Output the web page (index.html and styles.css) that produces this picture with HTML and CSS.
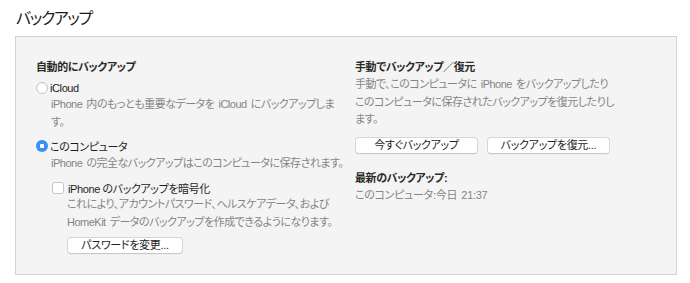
FILE: index.html
```html
<!DOCTYPE html>
<html lang="ja">
<head>
<meta charset="utf-8">
<title>バックアップ</title>
<link rel="stylesheet" href="styles.css">
</head>
<body>
<div class="page">
  <h1 class="title">バックアップ</h1>
  <section class="panel">
    <div class="col col-left">
      <h2 class="heading">自動的にバックアップ</h2>
      <div class="option">
        <span class="radio"></span>
        <span class="label">iCloud</span>
      </div>
      <p class="desc indent">iPhone 内のもっとも重要なデータを iCloud にバックアップしま<br>す。</p>
      <div class="option option-gap">
        <span class="radio radio-on"></span>
        <span class="label">このコンピュータ</span>
      </div>
      <p class="desc indent">iPhone の完全なバックアップはこのコンピュータに保存されます。</p>
      <div class="option check-row">
        <span class="checkbox"></span>
        <span class="label">iPhone のバックアップを暗号化</span>
      </div>
      <p class="desc indent2">これにより、アカウントパスワード、ヘルスケアデータ、および<br>HomeKit データのバックアップを作成できるようになります。</p>
      <div class="indent2 btn-row-left">
        <button class="btn btn-pass">パスワードを変更...</button>
      </div>
    </div>
    <div class="col col-right">
      <h2 class="heading">手動でバックアップ／復元</h2>
      <p class="desc">手動で、このコンピュータに iPhone をバックアップしたり<br>このコンピュータに保存されたバックアップを復元したりし<br>ます。</p>
      <div class="btn-row">
        <button class="btn btn-wide">今すぐバックアップ</button>
        <button class="btn btn-wide">バックアップを復元...</button>
      </div>
      <h2 class="heading latest">最新のバックアップ:</h2>
      <p class="status">このコンピュータ:今日 21:37</p>
    </div>
  </section>
</div>
</body>
</html>
```
FILE: styles.css
```css
* { box-sizing: border-box; }
html, body { margin: 0; padding: 0; background: #ffffff; }
body {
  font-family: "Liberation Sans", "Noto Sans CJK JP", sans-serif;
  font-feature-settings: "palt";
  color: #222;
  width: 690px;
  height: 283px;
  overflow: hidden;
}
.page { padding: 8px 0 0 15px; }
.title {
  margin: 0 0 6px 1px;
  font-size: 16px;
  line-height: 22px;
  font-weight: normal;
  letter-spacing: -1.4px;
  color: #1c1c1c;
}
.panel {
  width: 662px;
  border: 1px solid #d3d3d3;
  background: #f4f4f4;
  padding: 22px 20px 20px 20px;
  display: grid;
  grid-template-columns: 319px 1fr;
}
.heading {
  margin: 0;
  font-size: 11px;
  line-height: 17px;
  font-weight: bold;
  letter-spacing: -0.4px;
  color: #2a2a2a;
}
.option {
  display: flex;
  align-items: center;
  height: 17px;
  margin-top: 3px;
  font-size: 11px;
  letter-spacing: -0.4px;
  color: #1e1e1e;
}
.option-gap { margin-top: 6.5px; }
.check-row { margin-top: 7px; margin-left: 16px; }
.radio {
  width: 12px;
  height: 12px;
  border-radius: 50%;
  background: #fff;
  border: 1px solid #c4c4c4;
  margin-right: 2px;
  flex: none;
  box-shadow: inset 0 1px 1px rgba(0,0,0,0.04);
}
.radio-on {
  border: none;
  background: radial-gradient(circle, #ffffff 0 2px, #3a90f5 2.5px);
}
.checkbox {
  width: 12px;
  height: 12px;
  border-radius: 3px;
  background: #fff;
  border: 1px solid #c4c4c4;
  margin-right: 4px;
  flex: none;
}
.desc {
  margin: 0;
  font-size: 11px;
  line-height: 17.5px;
  letter-spacing: -0.5px;
  word-spacing: 1.5px;
  color: #858585;
  white-space: nowrap;
}
.indent { margin-left: 15px; }
.indent2 { margin-left: 31px; }
.btn-row-left { margin-top: 4px; }
.btn {
  font-family: inherit;
  font-feature-settings: "palt";
  font-size: 11px;
  letter-spacing: -0.3px;
  color: #222;
  background: #ffffff;
  border: 1px solid #d6d6d6;
  border-bottom-color: #c8c8c8;
  border-radius: 4px;
  height: 17px;
  padding: 0;
  line-height: 15px;
  box-shadow: 0 0.5px 0.5px rgba(0,0,0,0.06);
  cursor: default;
}
.btn-pass { width: 116px; }
.btn-row {
  display: flex;
  gap: 9px;
  margin-top: 8.5px;
}
.btn-wide { width: 123px; }
.latest { margin-top: 15.5px; line-height: 17.5px; }
.status {
  margin: 0;
  font-size: 11px;
  line-height: 17.5px;
  letter-spacing: -0.3px;
  word-spacing: 1.5px;
  color: #858585;
}
```
